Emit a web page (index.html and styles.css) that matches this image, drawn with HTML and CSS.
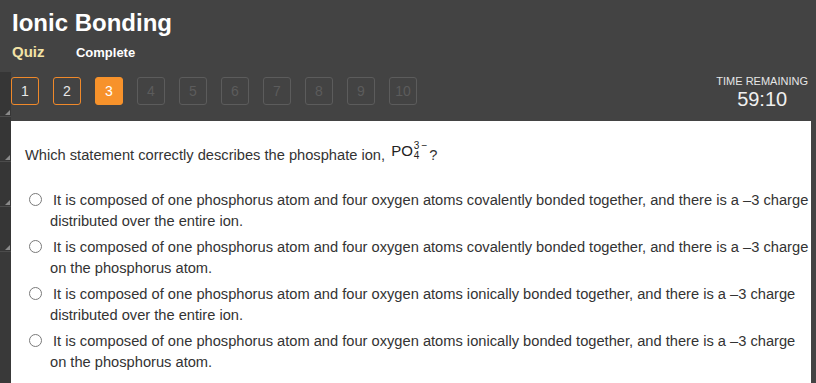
FILE: index.html
```html
<!DOCTYPE html>
<html>
<head>
    <title>Ionic Bonding - Quiz</title>
    <link rel="stylesheet" href="styles.css">
</head>
<body>
    <div class="header">
        <h1 class="lesson-title">Ionic Bonding</h1>
        <div class="lesson-sub">
            <span class="activity">Quiz</span>
            <span class="status">Complete</span>
        </div>
    </div>
    <div class="workspace">
        <div class="rail">
            <div class="rail-seg"></div>
            <div class="rail-seg"></div>
            <div class="rail-seg"></div>
            <div class="rail-seg"></div>
        </div>
        <div class="main">
            <div class="nav-row">
                <div class="question-nav">
                    <button class="q-btn done">1</button>
                    <button class="q-btn done">2</button>
                    <button class="q-btn current">3</button>
                    <button class="q-btn">4</button>
                    <button class="q-btn">5</button>
                    <button class="q-btn">6</button>
                    <button class="q-btn">7</button>
                    <button class="q-btn">8</button>
                    <button class="q-btn">9</button>
                    <button class="q-btn">10</button>
                </div>
                <div class="timer">
                    <div class="timer-label">TIME REMAINING</div>
                    <div class="timer-value">59:10</div>
                </div>
            </div>
            <div class="panel">
                <p class="question">Which statement correctly describes the phosphate ion, <span class="formula"><span class="formula-base">PO</span><span class="formula-idx"><span class="sup">3&thinsp;&minus;</span><span class="sub">4</span></span></span>?</p>
                <div class="options">
                    <label class="option">
                        <span class="radio"></span>
                        <span class="option-text">It is composed of one phosphorus atom and four oxygen atoms covalently bonded together, and there is a &ndash;3 charge distributed over the entire ion.</span>
                    </label>
                    <label class="option">
                        <span class="radio"></span>
                        <span class="option-text">It is composed of one phosphorus atom and four oxygen atoms covalently bonded together, and there is a &ndash;3 charge on the phosphorus atom.</span>
                    </label>
                    <label class="option">
                        <span class="radio"></span>
                        <span class="option-text">It is composed of one phosphorus atom and four oxygen atoms ionically bonded together, and there is a &ndash;3 charge distributed over the entire ion.</span>
                    </label>
                    <label class="option">
                        <span class="radio"></span>
                        <span class="option-text">It is composed of one phosphorus atom and four oxygen atoms ionically bonded together, and there is a &ndash;3 charge on the phosphorus atom.</span>
                    </label>
                </div>
            </div>
        </div>
    </div>
</body>
</html>
```

FILE: styles.css
```css
* {
    box-sizing: border-box;
    margin: 0;
    padding: 0;
}

body {
    background: #434343;
    font-family: 'Liberation Sans', Arial, sans-serif;
    height: 383px;
    overflow: hidden;
    display: flex;
    flex-direction: column;
}

.header {
    padding: 9px 12px 0;
}

.lesson-title {
    color: #ffffff;
    font-size: 24px;
    line-height: 28px;
    font-weight: bold;
}

.lesson-sub {
    margin-top: 6px;
    line-height: 18px;
    font-weight: bold;
}

.activity {
    color: #f3e3a6;
    font-size: 15px;
}

.status {
    color: #ffffff;
    font-size: 13px;
    margin-left: 27px;
}

.workspace {
    margin-top: 10px;
    flex: 1;
    display: flex;
}

.rail {
    width: 11px;
    background: #393939;
}

.rail-seg {
    height: 45px;
    background: #363636;
    border-bottom: 1px solid #4c4c4c;
    position: relative;
}

.rail-seg::after {
    content: '';
    position: absolute;
    right: 1px;
    bottom: 1px;
    border-left: 5px solid transparent;
    border-bottom: 5px solid #8a8a8a;
}

.main {
    flex: 1;
    display: flex;
    flex-direction: column;
    padding-right: 5px;
}

.nav-row {
    display: flex;
    justify-content: space-between;
    padding: 5px 3px 16px 0;
    height: 49px;
}

.question-nav {
    display: flex;
    gap: 14px;
}

.q-btn {
    width: 28px;
    height: 28px;
    border: 1px solid #5c5c5c;
    border-radius: 3px;
    background: transparent;
    color: #5c5c5c;
    font-family: 'Liberation Sans', Arial, sans-serif;
    font-size: 14px;
    line-height: 26px;
    text-align: center;
}

.q-btn.done {
    border-color: #f0892a;
    color: #e8e8e8;
}

.q-btn.current {
    border-color: #f7922b;
    background: #f7922b;
    color: #ffffff;
}

.timer {
    text-align: center;
    color: #e6e6e6;
    margin-top: -3px;
}

.timer-label {
    font-size: 11px;
    line-height: 14px;
}

.timer-value {
    font-size: 20px;
    line-height: 22px;
    color: #f0f0f0;
}

.panel {
    flex: 1;
    background: #ffffff;
    padding: 24px 0 0 14px;
    color: #333333;
    font-size: 14.67px;
}

.question {
    line-height: 21px;
}

.formula {
    display: inline-flex;
    align-items: center;
    vertical-align: 4px;
    margin: -6px 2px -6px 2px;
    color: #222;
}

.formula-base {
    font-size: 15px;
    line-height: 15px;
}

.formula-idx {
    display: inline-flex;
    flex-direction: column;
    font-size: 10px;
    line-height: 10px;
    margin-left: 1px;
}

.options {
    margin-top: 24px;
    display: flex;
    flex-direction: column;
    gap: 5px;
}

.option {
    display: flex;
    align-items: flex-start;
    line-height: 21px;
}

.radio {
    flex: none;
    width: 13px;
    height: 13px;
    border: 1px solid #7a7a7a;
    border-radius: 50%;
    margin: 3px 8px 0 4px;
}

.option-text {
    text-indent: 3px;
}
```
